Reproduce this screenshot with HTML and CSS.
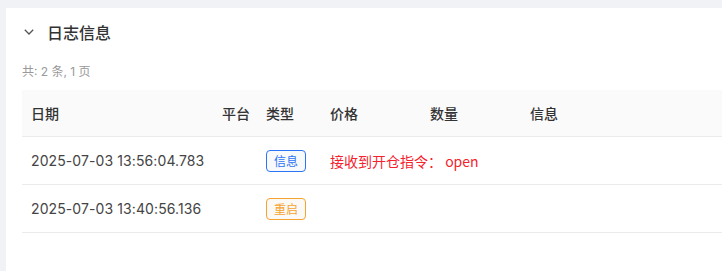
FILE: index.html
```html
<!DOCTYPE html>
<html lang="zh">
<head>
<meta charset="utf-8">
<link rel="stylesheet" href="styles.css">
</head>
<body>
<div class="card">
  <div class="head">
    <svg class="chev" width="10" height="6" viewBox="0 0 10 6"><path d="M0.8 0.8 L5 5 L9.2 0.8" fill="none" stroke="#555" stroke-width="1.3"/></svg>
    <span class="title">日志信息</span>
  </div>
  <div class="meta">共: 2 条, 1 页</div>
  <table class="tbl">
    <colgroup>
      <col class="c-date"><col class="c-plat"><col class="c-type"><col class="c-price"><col class="c-qty"><col>
    </colgroup>
    <thead>
      <tr><th>日期</th><th>平台</th><th>类型</th><th>价格</th><th>数量</th><th>信息</th></tr>
    </thead>
    <tbody>
      <tr>
        <td>2025-07-03 13:56:04.783</td><td></td>
        <td><span class="tag tag-info">信息</span></td>
        <td class="msg" colspan="3">接收到开仓指令： open</td>
      </tr>
      <tr>
        <td>2025-07-03 13:40:56.136</td><td></td>
        <td><span class="tag tag-warn">重启</span></td>
        <td></td><td></td><td></td>
      </tr>
    </tbody>
  </table>
</div>
</body>
</html>
```
FILE: styles.css
```css
html, body { margin: 0; padding: 0; }
body {
  background: #f0f2f5;
  font-family: "Noto Sans CJK SC", "Inter", sans-serif;
  color: #333;
  width: 722px;
  height: 271px;
  overflow: hidden;
}
.card {
  margin: 8px 0 0 6px;
  background: #fff;
  height: 263px;
  padding: 0 0 0 16px;
  box-sizing: border-box;
}
.head {
  display: flex;
  align-items: center;
  height: 48px;
}
.chev { margin-left: 2px; margin-right: 13px; }
.title {
  font-size: 16px;
  font-weight: 500;
  color: #333;
}
.meta {
  font-size: 12px;
  color: #999;
  height: 34px;
  line-height: 18px;
  padding-top: 7px;
  box-sizing: border-box;
  font-family: "Inter", "Noto Sans CJK SC", sans-serif;
}
.tbl {
  border-collapse: collapse;
  table-layout: fixed;
  width: 720px;
  font-size: 14px;
}
.c-date { width: 191px; }
.c-plat { width: 44px; }
.c-type { width: 64px; }
.c-price { width: 100px; }
.c-qty { width: 100px; }
.tbl th {
  background: #fafafa;
  font-weight: 500;
  text-align: left;
  height: 46px;
  padding: 0 0 0 9px;
  border-bottom: 1px solid #ebebeb;
  color: #333;
}
.tbl td {
  height: 47px;
  padding: 0 0 0 9px;
  border-bottom: 1px solid #ebebeb;
  color: #444;
  white-space: nowrap;
  font-family: "Inter", "Noto Sans CJK SC", sans-serif;
  letter-spacing: 0.1px;
}
.tag {
  display: inline-block;
  width: 40px;
  height: 22px;
  box-sizing: border-box;
  border-radius: 4px;
  font-size: 12px;
  line-height: 20px;
  text-align: center;
  background: #f8f9fb;
  font-family: "Noto Sans CJK SC", sans-serif;
  vertical-align: middle;
  letter-spacing: 0;
}
.tag-info { border: 1px solid #2b74f6; color: #2b74f6; }
.tag-warn { border: 1px solid #f5a32f; color: #f5a32f; background: #fbf9f6; }
.tbl td.msg { color: #f5222d; font-family: "Noto Sans CJK SC", sans-serif; letter-spacing: 0; }
```
